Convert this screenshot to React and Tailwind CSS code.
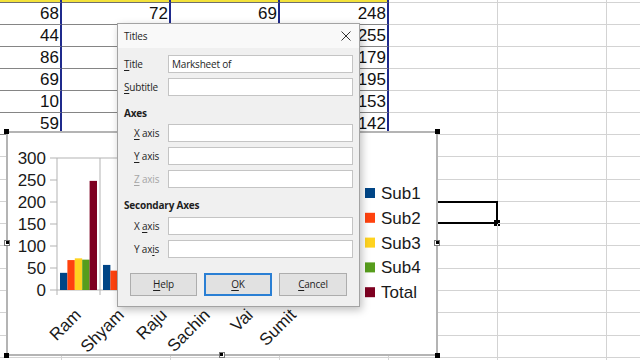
import React from 'react';

const COLORS = ['#004586', '#ff420e', '#ffd320', '#579d1c', '#7e0021'];
const SERIES = ['Sub1', 'Sub2', 'Sub3', 'Sub4', 'Total'];

const students = [
  { name: 'Ram', marks: [39, 68, 72, 69, 248] },
  { name: 'Shyam', marks: [57, 44, 78, 76, 255] },
  { name: 'Raju', marks: [30, 86, 35, 28, 179] },
  { name: 'Sachin', marks: [50, 69, 40, 36, 195] },
  { name: 'Vai', marks: [45, 10, 50, 48, 153] },
  { name: 'Sumit', marks: [20, 59, 33, 30, 142] },
];

const colW = ['w-[62px]', 'w-[109px]', 'w-[109px]', 'w-[109px]', 'w-[109px]', 'w-[109px]', 'w-[40px]'];

function Sheet() {
  return (
    <div className="flex flex-col font-['Liberation_Sans',Arial,sans-serif] text-[17px] text-[#111]">
      {/* bottom sliver of the highlighted header row */}
      <div className="flex h-[3px] shrink-0">
        {colW.map((w, i) =>
          i < 4 ? (
            <div key={i} className={`${w} shrink-0 border-r-2 border-b border-r-[#1f2a8c] border-b-[#6e6e6e] bg-[#f3e23a]`} />
          ) : (
            <div key={i} className={`${w} shrink-0 border-r border-b border-[#d3d3d3]`} />
          )
        )}
      </div>

      {/* data rows: Sub2, Sub3, Sub4, Total */}
      {students.map((s) => (
        <div key={s.name} className="flex h-[22px] shrink-0">
          {colW.map((w, i) =>
            i < 4 ? (
              <div key={i} className={`${w} flex shrink-0 items-center justify-end border-r-2 border-b border-r-[#1f2a8c] border-b-[#858585] pr-[1px] pt-[1px]`}>
                {s.marks[i + 1]}
              </div>
            ) : (
              <div key={i} className={`${w} shrink-0 border-r border-b border-[#d3d3d3]`} />
            )
          )}
        </div>
      ))}

      {/* empty rows under the data */}
      {Array.from({ length: 11 }).map((_, r) => (
        <div key={r} className="flex h-[22.3px] shrink-0">
          {colW.map((w, i) => (
            <div key={i} className={`${w} relative shrink-0 border-r border-b border-[#d3d3d3]`}>
              {r === 3 && i === 4 && (
                <div className="absolute -left-[1px] -top-[1px] -right-[1px] -bottom-[1px] border-2 border-black">
                  <div className="absolute -bottom-[4px] -right-[4px] h-[6px] w-[6px] bg-black" />
                </div>
              )}
            </div>
          ))}
        </div>
      ))}
    </div>
  );
}

function Chart() {
  const axisX = 49;
  const top = 25;
  const bottom = 157;
  const catW = 43;
  const scale = (bottom - top) / 300;
  const ticks = [300, 250, 200, 150, 100, 50, 0];

  return (
    <div className="absolute left-[6px] top-[131px] h-[225px] w-[432px] border-2 border-[#b4b4b4] bg-white">
      <svg width="428" height="221" viewBox="0 0 428 221" fontFamily="Liberation Sans, Arial, sans-serif" fontSize="17" fill="#1a1a1a">
        {/* plot frame */}
        <line x1={axisX} y1={top} x2={axisX + catW * 6} y2={top} stroke="#b3b3b3" strokeWidth="1" />
        <line x1={axisX} y1={bottom} x2={axisX + catW * 6} y2={bottom} stroke="#b3b3b3" strokeWidth="1" />
        {Array.from({ length: 7 }).map((_, k) => (
          <line key={k} x1={axisX + catW * k} y1={top} x2={axisX + catW * k} y2={bottom + 5} stroke="#b3b3b3" strokeWidth="1" />
        ))}
        {ticks.map((t) => {
          const y = bottom - t * scale;
          return (
            <g key={t}>
              <line x1={axisX - 7} y1={y} x2={axisX} y2={y} stroke="#b3b3b3" strokeWidth="1" />
              <text x={38} y={y + 6} textAnchor="end">{t}</text>
            </g>
          );
        })}

        {/* bars */}
        {students.map((s, k) =>
          s.marks.map((v, j) => (
            <rect
              key={`${k}-${j}`}
              x={axisX + catW * k + 3 + 7.4 * j}
              y={bottom - v * scale}
              width={7.4}
              height={v * scale}
              fill={COLORS[j]}
            />
          ))
        )}

        {/* category labels */}
        {students.map((s, k) => {
          const x = 74 + catW * k;
          const y = 183;
          return (
            <text key={s.name} x={x} y={y} textAnchor="end" transform={`rotate(-45 ${x} ${y})`}>
              {s.name}
            </text>
          );
        })}

        {/* legend */}
        {SERIES.map((name, i) => {
          const cy = 60 + 24.8 * i;
          return (
            <g key={name}>
              <rect x={357} y={cy - 5} width={10} height={10} fill={COLORS[i]} />
              <text x={373} y={cy + 6}>{name}</text>
            </g>
          );
        })}
      </svg>
    </div>
  );
}

function Handles() {
  return (
    <>
      <div className="absolute left-[4px] top-[129px] h-[5px] w-[5px] bg-black" />
      <div className="absolute left-[435px] top-[129px] h-[5px] w-[5px] bg-black" />
      <div className="absolute left-[4px] top-[353px] h-[5px] w-[5px] bg-black" />
      <div className="absolute left-[435px] top-[353px] h-[5px] w-[5px] bg-black" />
      <div className="absolute left-[4px] top-[240px] h-[6px] w-[6px] border border-[#777] bg-white">
        <div className="ml-auto h-[3px] w-[3px] bg-black" />
      </div>
      <div className="absolute left-[434px] top-[240px] h-[6px] w-[6px] border border-[#777] bg-white">
        <div className="ml-auto h-[3px] w-[3px] bg-black" />
      </div>
      <div className="absolute left-[219px] top-[352px] h-[6px] w-[6px] border border-[#777] bg-white">
        <div className="h-[3px] w-[3px] bg-black" />
      </div>
    </>
  );
}

function Field({ label, value, indent, disabled }) {
  return (
    <div className="flex h-[18px] shrink-0 items-center">
      <div className={`w-[44px] shrink-0 ${indent ? 'pl-[10px]' : ''} ${disabled ? 'text-[#a6a6a6]' : ''}`}>{label}</div>
      <div className="flex h-full flex-1 items-center border border-[#c4c4c4] bg-white px-[3px]">{value}</div>
    </div>
  );
}

function U({ children }) {
  return <span className="underline underline-offset-[2px]">{children}</span>;
}

function TitlesDialog() {
  return (
    <div className="absolute left-[117px] top-[23px] flex h-[284px] w-[243px] flex-col border border-[#a3a3a3] bg-[#f0f0f0] font-['Open_Sans',sans-serif] text-[10px] tracking-[-0.2px] text-[#1e1e1e] shadow-[2px_3px_8px_rgba(0,0,0,0.25)]">
      <div className="flex h-[24px] shrink-0 items-center justify-between bg-[#f9f9f9] pl-[6px] pr-[8px]">
        <span>Titles</span>
        <svg width="10" height="10" viewBox="0 0 10 10">
          <path d="M0.5 0.5 L9.5 9.5 M9.5 0.5 L0.5 9.5" stroke="#333" strokeWidth="1" />
        </svg>
      </div>

      <div className="flex flex-col px-[6px] pt-[7px]">
        <div className="flex flex-col gap-[5px]">
          <Field label={<><U>T</U>itle</>} value="Marksheet of" />
          <Field label={<><U>S</U>ubtitle</>} />
        </div>

        <div className="mt-[9px] h-[16px] font-bold leading-[16px]">Axes</div>
        <div className="mt-[3px] flex flex-col gap-[5px]">
          <Field indent label={<><U>X</U> axis</>} />
          <Field indent label={<><U>Y</U> axis</>} />
          <Field indent disabled label={<><U>Z</U> axis</>} />
        </div>

        <div className="mt-[9px] h-[16px] font-bold leading-[16px]">Secondary Axes</div>
        <div className="mt-[4px] flex flex-col gap-[5px]">
          <Field indent label={<>X <U>a</U>xis</>} />
          <Field indent label={<>Y ax<U>i</U>s</>} />
        </div>

        <div className="mt-[15px] flex gap-[7px] pl-[6px]">
          <button className="flex h-[23px] w-[67px] items-center justify-center border border-[#adadad] bg-[#e1e1e1]">
            <U>H</U>elp
          </button>
          <button className="flex h-[23px] w-[68px] items-center justify-center border-2 border-[#2a7fd4] bg-[#e1e1e1]">
            <U>O</U>K
          </button>
          <button className="flex h-[23px] w-[68px] items-center justify-center border border-[#adadad] bg-[#e1e1e1]">
            <U>C</U>ancel
          </button>
        </div>
      </div>
    </div>
  );
}

export default function App() {
  return (
    <div className="relative h-[360px] w-[640px] overflow-hidden bg-white">
      <Sheet />
      <Chart />
      <Handles />
      <TitlesDialog />
    </div>
  );
}
